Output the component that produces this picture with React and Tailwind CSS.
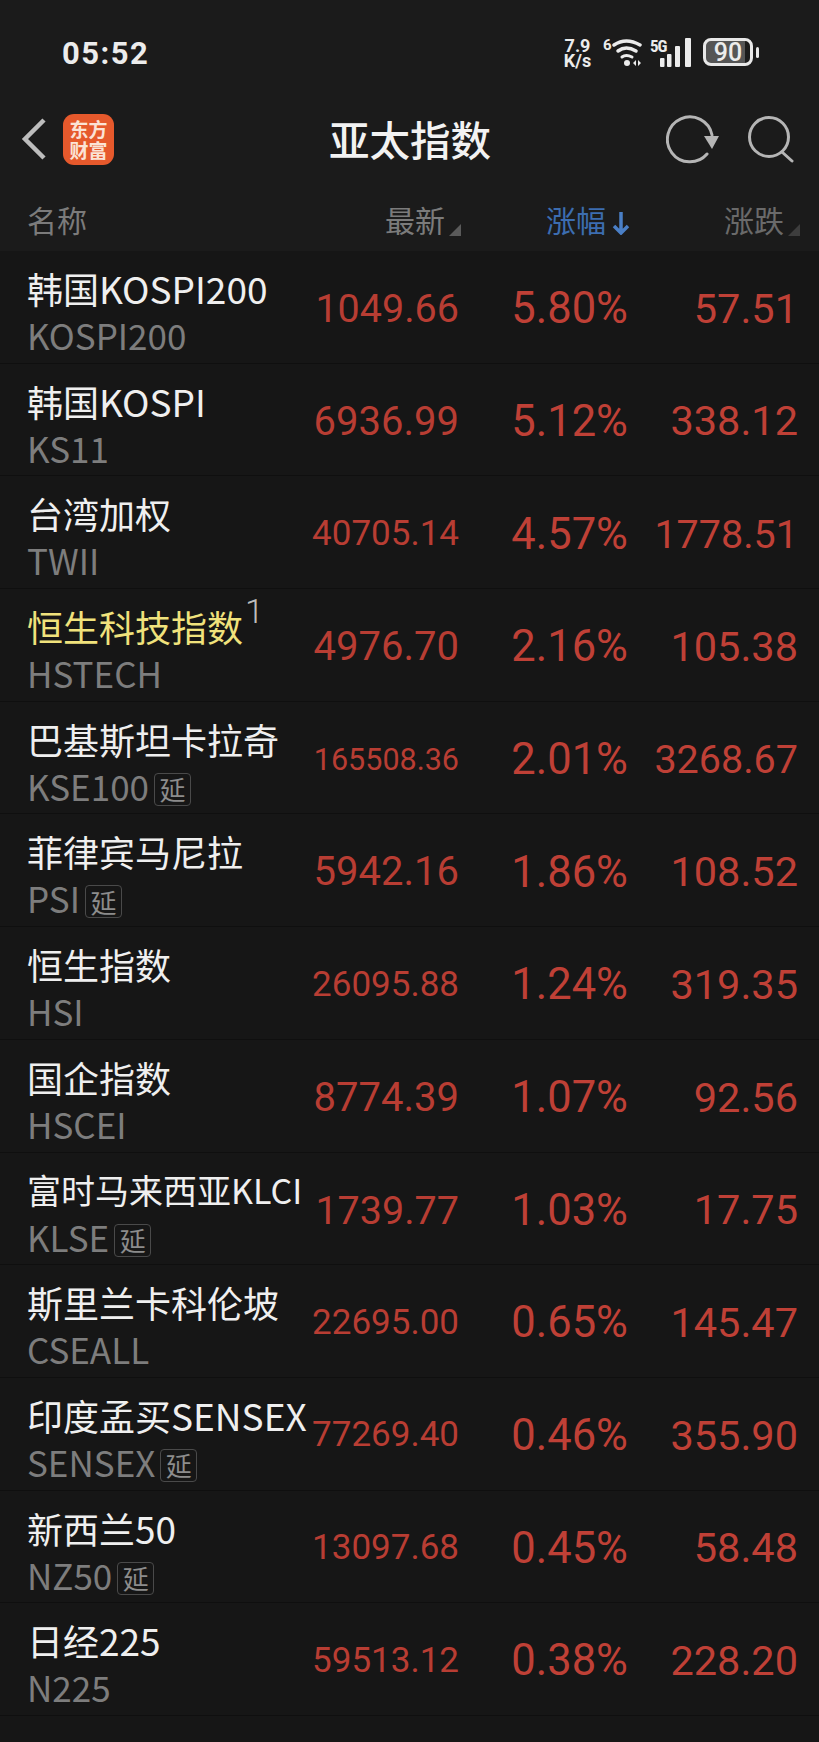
const rows = [
  { name: "韩国KOSPI200", code: "KOSPI200", latest: "1049.66", size: "text-[39.5px]", pct: "5.80%", chg: "57.51" },
  { name: "韩国KOSPI", code: "KS11", latest: "6936.99", size: "text-[40px]", pct: "5.12%", chg: "338.12" },
  { name: "台湾加权", code: "TWII", latest: "40705.14", size: "text-[35px]", pct: "4.57%", chg: "1778.51" },
  { name: "恒生科技指数", code: "HSTECH", latest: "4976.70", size: "text-[40px]", pct: "2.16%", chg: "105.38", hot: true },
  { name: "巴基斯坦卡拉奇", code: "KSE100", latest: "165508.36", size: "text-[30.5px]", pct: "2.01%", chg: "3268.67", delay: true },
  { name: "菲律宾马尼拉", code: "PSI", latest: "5942.16", size: "text-[40px]", pct: "1.86%", chg: "108.52", delay: true },
  { name: "恒生指数", code: "HSI", latest: "26095.88", size: "text-[35px]", pct: "1.24%", chg: "319.35" },
  { name: "国企指数", code: "HSCEI", latest: "8774.39", size: "text-[40px]", pct: "1.07%", chg: "92.56" },
  { name: "富时马来西亚KLCI", code: "KLSE", latest: "1739.77", size: "text-[39.5px]", pct: "1.03%", chg: "17.75", delay: true, tight: true },
  { name: "斯里兰卡科伦坡", code: "CSEALL", latest: "22695.00", size: "text-[35px]", pct: "0.65%", chg: "145.47" },
  { name: "印度孟买SENSEX", code: "SENSEX", latest: "77269.40", size: "text-[35px]", pct: "0.46%", chg: "355.90", delay: true },
  { name: "新西兰50", code: "NZ50", latest: "13097.68", size: "text-[35px]", pct: "0.45%", chg: "58.48", delay: true },
  { name: "日经225", code: "N225", latest: "59513.12", size: "text-[35px]", pct: "0.38%", chg: "228.20" },
];

const cjk = "font-['Noto_Sans_CJK_SC','Noto_Sans',sans-serif]";

function StatusIcons() {
  return (
    <div className="flex items-start text-[#ececec]">
      <div className="w-[41px] -ml-[1px] font-['Roboto',sans-serif] font-bold text-[18px] leading-[15px] text-center pr-[10px]">
        7.9<br />K/s
      </div>
      <div className="relative w-[40px] h-[30px]">
        <span className="absolute left-0 top-[-3px] font-['Roboto',sans-serif] font-bold text-[15px] leading-[20px]">6</span>
        <svg width="40" height="30" viewBox="0 0 40 30" fill="none" stroke="currentColor" strokeWidth="3.5" strokeLinecap="round">
          <path d="M11 7 Q23 -1 37 7" />
          <path d="M15 13 Q23 7 33 13" />
          <path d="M19 19 Q23 16 29 19" strokeWidth="3" />
          <circle cx="24" cy="25" r="3" fill="currentColor" stroke="none" />
          <path d="M33 22 L30 25 L33 28 Z M35 22 L38 25 L35 28 Z" fill="currentColor" stroke="none" />
        </svg>
      </div>
      <div className="relative w-[43px] h-[30px] ml-[7px] mr-[10px]">
        <span className="absolute left-0 top-[-2px] font-['Roboto_Condensed','Roboto',sans-serif] font-bold text-[17px] leading-[20px] tracking-[-1px]">5G</span>
        <svg width="43" height="30" viewBox="0 0 43 30" fill="currentColor">
          <rect x="10" y="20" width="4.5" height="9" rx="1" />
          <rect x="17" y="16" width="4.5" height="13" rx="1" />
          <rect x="25" y="8" width="5" height="21" rx="1" />
          <rect x="35" y="0" width="6" height="29" rx="1" />
        </svg>
      </div>
      <div className="flex items-center gap-[3px]">
        <div className="w-[50px] h-[28px] rounded-[8px] border-[3px] border-[#e8e8e8] flex items-center justify-center font-['Roboto',sans-serif] font-medium text-[25px] leading-none bg-[linear-gradient(90deg,#555_0%,#555_88%,transparent_88%)]">
          90
        </div>
        <div className="w-[3px] h-[11px] rounded-full bg-[#e8e8e8]" />
      </div>
    </div>
  );
}

function Corner({ color }) {
  return (
    <svg width="12" height="12" viewBox="0 0 12 12" className="ml-[4px] mb-[5px]">
      <path d="M12 0 V12 H0 Z" fill={color} />
    </svg>
  );
}

function Name({ text, tight }) {
  const parts = text.split(/([A-Za-z0-9]+)/);
  return parts.map((p, i) =>
    i % 2 === 1 ? <span key={i} className={tight ? "text-[34px]" : "text-[37px]"}>{p}</span> : <span key={i}>{p}</span>
  );
}

function Row({ r }) {
  return (
    <div className="h-[112.7px] grid grid-cols-[282px_150px_169px_170px] pl-[27px] border-b border-[#0f0f0f]">
      <div className="pt-[15px] whitespace-nowrap">
        <div className={`${cjk} ${r.tight ? "text-[34px]" : "text-[36px]"} leading-[44px] ${r.hot ? "text-[#f0e27c]" : "text-[#efefef]"} relative`}>
          <Name text={r.name} tight={r.tight} />
          {r.hot && (
            <span className="absolute left-[218px] top-[-11px] font-['Roboto',sans-serif] font-light text-[34px] leading-[36px] text-[#bdbdbd]">1</span>
          )}
        </div>
        <div className={`flex items-center h-[50px] ${cjk} text-[35px] text-[#7d7d7d] leading-[50px]`}>
          {r.code}
          {r.delay && (
            <span className={`${cjk} ml-[5px] mt-[7px] w-[37px] h-[33px] border border-[#4a4a4a] rounded-[4px] flex items-center justify-center text-[26px] leading-none text-[#8c8c8c]`}>延</span>
          )}
        </div>
      </div>
      <div className={`flex items-center justify-end pt-[4px] font-['Roboto',sans-serif] ${r.size} text-[#b83d33] whitespace-nowrap`}>{r.latest}</div>
      <div className="flex items-center justify-end pt-[4px] font-['Roboto',sans-serif] text-[43.5px] text-[#bf4036] whitespace-nowrap">{r.pct}</div>
      <div className={`flex items-center justify-end pt-[4px] font-['Roboto',sans-serif] ${r.chg.length > 6 ? "text-[39.5px]" : "text-[41.5px]"} text-[#bf4036] whitespace-nowrap`}>{r.chg}</div>
    </div>
  );
}

export default function App() {
  return (
    <div className="w-[819px] h-[1742px] overflow-hidden bg-[#161616] flex flex-col">
      <div className="h-[251px] shrink-0 bg-[#1b1b1b] flex flex-col">
        <div className="h-[108px] flex items-start justify-between pt-[37px] pl-[62px] pr-[60px]">
          <span className="font-['Roboto',sans-serif] font-bold text-[31px] leading-[34px] tracking-[1.5px] text-[#ececec]">05:52</span>
          <div className="pt-[1px]"><StatusIcons /></div>
        </div>
        <div className="h-[62px] relative flex items-center justify-between pl-[20px] pr-[25px]">
          <div className="flex items-center gap-[17px]">
            <svg width="26" height="42" viewBox="0 0 26 42" fill="none" stroke="#bdbdbd" strokeWidth="4.5">
              <path d="M24 2 L5 21 L24 40" strokeLinejoin="miter" />
            </svg>
            <div className="w-[51px] h-[51px] rounded-[11px] bg-[#e6592c] flex items-center justify-center">
              <div className={`${cjk} w-[40px] text-center text-[#fbe3d6] font-bold text-[19px] leading-[21px]`}>东方财富</div>
            </div>
          </div>
          <div className={`${cjk} absolute left-[329px] w-[162px] whitespace-nowrap text-center text-[40.5px] leading-[62px] text-[#f2f2f2] font-medium`}>亚太指数</div>
          <div className="flex items-center gap-[28px]">
            <svg width="54" height="50" viewBox="0 0 54 50" fill="none" stroke="#b5b5b5" strokeWidth="3">
              <path d="M46 21 A22.5 22.5 0 1 0 41 40" strokeLinecap="round" />
              <path d="M38 22 H53 L46 35 Z" fill="#b5b5b5" stroke="none" />
            </svg>
            <svg width="46" height="48" viewBox="0 0 46 48" fill="none" stroke="#b5b5b5" strokeWidth="3" strokeLinecap="round">
              <circle cx="21" cy="22" r="19.5" />
              <path d="M34 37 L44 46" />
            </svg>
          </div>
        </div>
        <div className={`${cjk} flex-1 grid grid-cols-[282px_150px_169px_170px] pl-[27px] pt-[27px] text-[30px] leading-[44px] text-[#7b7b7b]`}>
          <div>名称</div>
          <div className="flex items-end justify-end h-[44px] -mr-[2px]">最新<Corner color="#5a5a5a" /></div>
          <div className="flex items-end justify-end h-[44px] text-[#3c6db0] -mr-[2px]">
            涨幅
            <svg width="18" height="23" viewBox="0 0 18 23" fill="none" stroke="#4a7fc6" strokeWidth="3.5" className="mb-[6px] ml-[6px]">
              <path d="M9 0 V21 M2 14 L9 21 L16 14" />
            </svg>
          </div>
          <div className="flex items-end justify-end h-[44px] text-[#6a6a6a] -mr-[2px]">涨跌<Corner color="#3d3d3d" /></div>
        </div>
      </div>
      <div>
        {rows.map((r) => <Row key={r.code} r={r} />)}
      </div>
    </div>
  );
}
